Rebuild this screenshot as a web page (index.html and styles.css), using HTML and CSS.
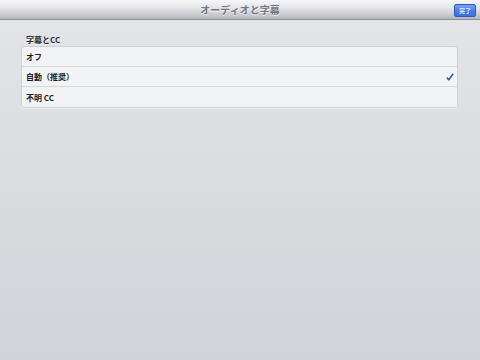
FILE: index.html
```html
<!DOCTYPE html>
<html lang="ja">
<head>
<meta charset="utf-8">
<link rel="stylesheet" href="styles.css">
</head>
<body>
<div class="screen">
  <header class="navbar">
    <div class="title">オーディオと字幕</div>
    <button class="done">完了</button>
  </header>
  <main class="content">
    <div class="section-title">字幕とCC</div>
    <div class="group">
      <div class="row"><span>オフ</span></div>
      <div class="row"><span>自動（推奨）</span>
        <svg class="check" width="8" height="8" viewBox="0 0 8 8"><path d="M0.8 4.6 L2.8 6.8 L7.2 0.8" fill="none" stroke="#3a5a96" stroke-width="1.6" stroke-linejoin="round"/></svg>
      </div>
      <div class="row"><span>不明 CC</span></div>
    </div>
  </main>
</div>
</body>
</html>
```
FILE: styles.css
```css
html, body {
  margin: 0;
  padding: 0;
}
body {
  width: 480px;
  height: 360px;
  overflow: hidden;
  font-family: "Noto Sans CJK JP", "Liberation Sans", sans-serif;
}
.screen {
  width: 480px;
  height: 360px;
  display: flex;
  flex-direction: column;
  background: linear-gradient(to bottom, #e3e5e9 0%, #dcdee2 40%, #d2d3d8 100%);
}
.navbar {
  height: 20px;
  flex: none;
  position: relative;
  display: flex;
  align-items: center;
  justify-content: center;
  background: linear-gradient(to bottom, #f7f7f9 0%, #e2e3e7 45%, #c6c8ce 80%, #b2b5bd 100%);
  border-bottom: 1px solid #8d9098;
  box-sizing: border-box;
}
.title {
  font-size: 10px;
  font-weight: bold;
  color: #72767f;
  text-shadow: 0 1px 0 rgba(255,255,255,0.8);
  line-height: 1;
}
.done {
  position: absolute;
  right: 4px;
  top: 4px;
  width: 22px;
  height: 13px;
  padding: 0;
  border: 1px solid #2f5bb5;
  border-radius: 2px;
  background: linear-gradient(to bottom, #7aa3f0 0%, #4b7ee6 50%, #3e71dc 100%);
  color: #dfe8fb;
  font-family: "Noto Sans CJK JP", sans-serif;
  font-size: 6px;
  font-weight: bold;
  line-height: 11px;
}
.content {
  padding: 14px 22px 0 21px;
}
.section-title {
  font-size: 8px;
  font-weight: bold;
  color: #2a2c30;
  line-height: 12px;
  padding-left: 5px;
  text-shadow: 0 1px 0 rgba(255,255,255,0.6);
}
.group {
  background: #f2f3f5;
  border: 1px solid #cfd0d4;
  border-radius: 3px;
  box-shadow: 0 1px 0 rgba(255,255,255,0.5);
}
.row {
  height: 20px;
  box-sizing: border-box;
  display: flex;
  align-items: center;
  justify-content: space-between;
  padding: 0 3px 0 4px;
  font-size: 8px;
  font-weight: bold;
  color: #1c1d20;
  border-top: 1px solid #d6d7db;
}
.row:first-child {
  border-top: none;
  height: 19px;
}
.row:last-child {
  height: 21px;
}
.check {
  display: block;
}
```
